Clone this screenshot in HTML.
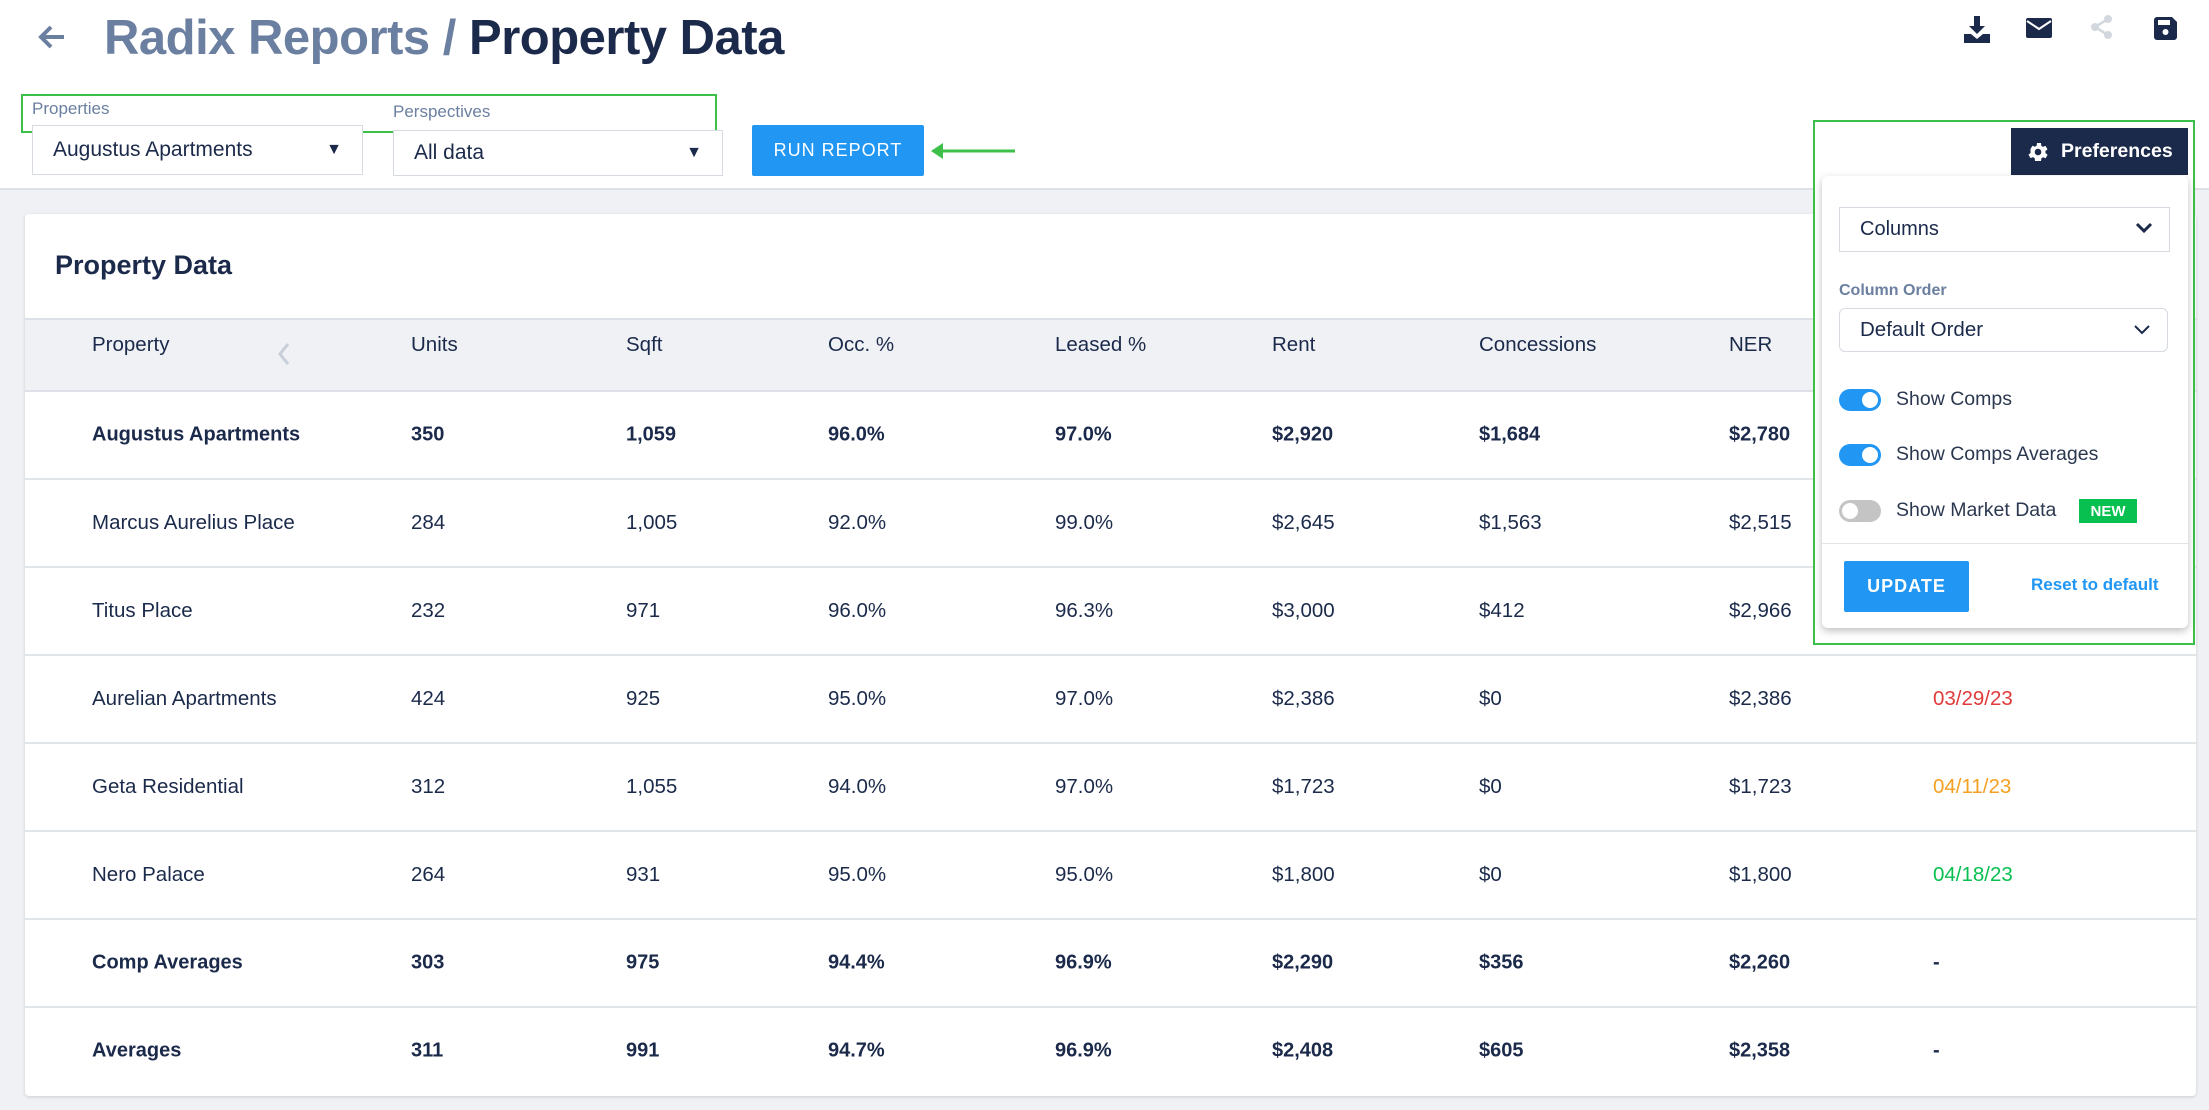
<!DOCTYPE html>
<html><head><meta charset="utf-8"><style>
*{box-sizing:border-box;margin:0;padding:0}
body{width:2209px;height:1110px;overflow:hidden;background:#eff1f5;font-family:"Liberation Sans",Arial,sans-serif;color:#1b2a4a;position:relative}
.a{position:absolute;white-space:nowrap}
.hdr{position:absolute;left:0;top:0;width:2209px;height:190px;background:#fff;border-bottom:2px solid #dde1e7}
.card{position:absolute;left:25px;top:214px;width:2171px;height:882px;background:#fff;box-shadow:0 1px 3px rgba(0,0,0,.15);border-radius:4px}
.th{position:absolute;left:25px;top:318px;width:2171px;height:74px;background:#eff1f5;border-top:2px solid #dde1e7;border-bottom:2px solid #dde1e7}
.line{position:absolute;left:25px;width:2171px;height:2px;background:#e1e5ea}
.c{position:absolute;font-size:20.5px;transform:translateY(-50%);color:#1b2a4a}
.b{font-weight:bold;font-size:20px}
.sel{position:absolute;border:1px solid #d6dbe2;background:#fff;font-size:21px;padding-left:20px;display:flex;align-items:center}
.tog{position:absolute;width:42px;height:22px;border-radius:11px;background:#2196f3}
.tog::after{content:"";position:absolute;right:3px;top:3px;width:16px;height:16px;border-radius:50%;background:#fff}
.tog.off{background:#c4c4c4}
.tog.off::after{left:3px;right:auto}
</style></head><body>
<div class="hdr"></div>
<svg class="a" style="left:36px;top:22px" width="32" height="30" viewBox="0 0 32 30"><path d="M28 15H6M15 5L5 15l10 10" stroke="#6b7fa0" stroke-width="4" fill="none"/></svg>
<div class="a" style="left:104px;top:8px;font-size:49px;line-height:60px;color:#6b7fa0;font-weight:bold;letter-spacing:-0.5px">Radix Reports / <span style="color:#1b2a4a">Property Data</span></div>
<!-- top icons -->
<svg class="a" style="left:1964px;top:16px" width="26" height="28" viewBox="0 0 26 28"><path d="M10 0h6v10h5l-8 8-8-8h5z M0 18h7l6 5 6-5h7v9H0z" fill="#1b2a4a"/></svg>
<svg class="a" style="left:2026px;top:18px" width="26" height="20" viewBox="0 0 26 20"><rect width="26" height="20" rx="2" fill="#1b2a4a"/><path d="M1 3l12 8 12-8" stroke="#fff" stroke-width="2" fill="none"/></svg>
<svg class="a" style="left:2091px;top:15px" width="22" height="24" viewBox="0 0 22 24"><circle cx="17" cy="4" r="4" fill="#d3d8df"/><circle cx="4" cy="12" r="4" fill="#d3d8df"/><circle cx="17" cy="20" r="4" fill="#d3d8df"/><path d="M17 4L4 12l13 8" stroke="#d3d8df" stroke-width="2.5" fill="none"/></svg>
<svg class="a" style="left:2154px;top:17px" width="23" height="23" viewBox="0 0 23 23"><path d="M0 3a3 3 0 013-3h15l5 5v15a3 3 0 01-3 3H3a3 3 0 01-3-3z" fill="#1b2a4a"/><rect x="4" y="3" width="12" height="5" fill="#fff"/><circle cx="11.5" cy="15" r="3" fill="#fff"/></svg>
<!-- filters -->
<div class="a" style="left:21px;top:94px;width:696px;height:39px;border:2px solid #3cc04a"></div>
<div class="a" style="left:32px;top:99px;font-size:17px;color:#6b7fa0">Properties</div>
<div class="a" style="left:393px;top:102px;font-size:17px;color:#6b7fa0">Perspectives</div>
<div class="sel" style="left:32px;top:125px;width:331px;height:50px;font-size:21px">Augustus Apartments<span class="a" style="right:20px;font-size:16px">▼</span></div>
<div class="sel" style="left:393px;top:130px;width:330px;height:46px;font-size:21px">All data<span class="a" style="right:20px;font-size:16px">▼</span></div>
<div class="a" style="left:752px;top:125px;width:172px;height:51px;background:#2196f3;border-radius:2px;color:#fff;font-size:18px;letter-spacing:1px;display:flex;align-items:center;justify-content:center">RUN REPORT</div>
<svg class="a" style="left:931px;top:142px" width="86" height="18" viewBox="0 0 86 18"><path d="M84 9H8" stroke="#3cc04a" stroke-width="3"/><path d="M0 9l12-8v16z" fill="#3cc04a"/></svg>
<!-- card -->
<div class="card"></div>
<div class="a" style="left:55px;top:250px;font-size:27px;font-weight:bold">Property Data</div>
<div class="th"></div>
<svg class="a" style="left:277px;top:342px" width="14" height="24" viewBox="0 0 14 24"><path d="M11 2L3 12l8 10" stroke="#c8cfd8" stroke-width="3" fill="none"/></svg>
<div class="line" style="top:478px"></div><div class="line" style="top:566px"></div><div class="line" style="top:654px"></div><div class="line" style="top:742px"></div><div class="line" style="top:830px"></div><div class="line" style="top:918px"></div><div class="line" style="top:1006px"></div>

<div class="c" style="left:92px;top:345px">Property</div>
<div class="c" style="left:411px;top:345px">Units</div>
<div class="c" style="left:626px;top:345px">Sqft</div>
<div class="c" style="left:828px;top:345px">Occ. %</div>
<div class="c" style="left:1055px;top:345px">Leased %</div>
<div class="c" style="left:1272px;top:345px">Rent</div>
<div class="c" style="left:1479px;top:345px">Concessions</div>
<div class="c" style="left:1729px;top:345px">NER</div>

<div class="c b" style="left:92px;top:435px">Augustus Apartments</div><div class="c b" style="left:411px;top:435px">350</div><div class="c b" style="left:626px;top:435px">1,059</div><div class="c b" style="left:828px;top:435px">96.0%</div><div class="c b" style="left:1055px;top:435px">97.0%</div><div class="c b" style="left:1272px;top:435px">$2,920</div><div class="c b" style="left:1479px;top:435px">$1,684</div><div class="c b" style="left:1729px;top:435px">$2,780</div>

<div class="c" style="left:92px;top:523px">Marcus Aurelius Place</div><div class="c" style="left:411px;top:523px">284</div><div class="c" style="left:626px;top:523px">1,005</div><div class="c" style="left:828px;top:523px">92.0%</div><div class="c" style="left:1055px;top:523px">99.0%</div><div class="c" style="left:1272px;top:523px">$2,645</div><div class="c" style="left:1479px;top:523px">$1,563</div><div class="c" style="left:1729px;top:523px">$2,515</div>

<div class="c" style="left:92px;top:611px">Titus Place</div><div class="c" style="left:411px;top:611px">232</div><div class="c" style="left:626px;top:611px">971</div><div class="c" style="left:828px;top:611px">96.0%</div><div class="c" style="left:1055px;top:611px">96.3%</div><div class="c" style="left:1272px;top:611px">$3,000</div><div class="c" style="left:1479px;top:611px">$412</div><div class="c" style="left:1729px;top:611px">$2,966</div>

<div class="c" style="left:92px;top:699px">Aurelian Apartments</div><div class="c" style="left:411px;top:699px">424</div><div class="c" style="left:626px;top:699px">925</div><div class="c" style="left:828px;top:699px">95.0%</div><div class="c" style="left:1055px;top:699px">97.0%</div><div class="c" style="left:1272px;top:699px">$2,386</div><div class="c" style="left:1479px;top:699px">$0</div><div class="c" style="left:1729px;top:699px">$2,386</div><div class="c" style="left:1933px;top:699px;color:#e03a3a">03/29/23</div>

<div class="c" style="left:92px;top:787px">Geta Residential</div><div class="c" style="left:411px;top:787px">312</div><div class="c" style="left:626px;top:787px">1,055</div><div class="c" style="left:828px;top:787px">94.0%</div><div class="c" style="left:1055px;top:787px">97.0%</div><div class="c" style="left:1272px;top:787px">$1,723</div><div class="c" style="left:1479px;top:787px">$0</div><div class="c" style="left:1729px;top:787px">$1,723</div><div class="c" style="left:1933px;top:787px;color:#f5a020">04/11/23</div>

<div class="c" style="left:92px;top:875px">Nero Palace</div><div class="c" style="left:411px;top:875px">264</div><div class="c" style="left:626px;top:875px">931</div><div class="c" style="left:828px;top:875px">95.0%</div><div class="c" style="left:1055px;top:875px">95.0%</div><div class="c" style="left:1272px;top:875px">$1,800</div><div class="c" style="left:1479px;top:875px">$0</div><div class="c" style="left:1729px;top:875px">$1,800</div><div class="c" style="left:1933px;top:875px;color:#08c050">04/18/23</div>

<div class="c b" style="left:92px;top:963px">Comp Averages</div><div class="c b" style="left:411px;top:963px">303</div><div class="c b" style="left:626px;top:963px">975</div><div class="c b" style="left:828px;top:963px">94.4%</div><div class="c b" style="left:1055px;top:963px">96.9%</div><div class="c b" style="left:1272px;top:963px">$2,290</div><div class="c b" style="left:1479px;top:963px">$356</div><div class="c b" style="left:1729px;top:963px">$2,260</div><div class="c b" style="left:1933px;top:963px">-</div>

<div class="c b" style="left:92px;top:1051px">Averages</div><div class="c b" style="left:411px;top:1051px">311</div><div class="c b" style="left:626px;top:1051px">991</div><div class="c b" style="left:828px;top:1051px">94.7%</div><div class="c b" style="left:1055px;top:1051px">96.9%</div><div class="c b" style="left:1272px;top:1051px">$2,408</div><div class="c b" style="left:1479px;top:1051px">$605</div><div class="c b" style="left:1729px;top:1051px">$2,358</div><div class="c b" style="left:1933px;top:1051px">-</div>

<!-- preferences -->
<div class="a" style="left:1813px;top:120px;width:382px;height:525px;border:2px solid #3cc04a;background:#fff"></div>
<div class="a" style="left:1815px;top:192px;width:378px;height:451px;background:#fff"></div>
<div class="a" style="left:2011px;top:128px;width:177px;height:47px;background:#1b2a4a;color:#fff;font-size:19.5px;font-weight:bold;display:flex;align-items:center;padding-left:15px">
<svg width="24" height="24" viewBox="0 0 24 24" style="margin-right:11px"><path fill="#fff" d="M19.4 13a7.6 7.6 0 000-2l2.1-1.6-2-3.5-2.5 1a7 7 0 00-1.7-1L15 3h-4l-.4 2.7a7 7 0 00-1.7 1l-2.5-1-2 3.5L4.6 11a7.6 7.6 0 000 2l-2.1 1.6 2 3.5 2.5-1a7 7 0 001.7 1L9 21h6l.4-2.7a7 7 0 001.7-1l2.5 1 2-3.5zM12 15.3a3.3 3.3 0 110-6.6 3.3 3.3 0 010 6.6z"/></svg>Preferences</div>
<div class="a" style="left:1822px;top:176px;width:366px;height:452px;background:#fff;border-radius:6px;box-shadow:0 3px 8px rgba(0,0,0,.25)"></div>
<div class="sel" style="left:1839px;top:207px;width:331px;height:45px;font-size:20px;border-color:#d6dbe2">Columns<svg class="a" style="right:16px;top:14px" width="18" height="12" viewBox="0 0 18 12"><path d="M2 2l7 7 7-7" stroke="#1b2a4a" stroke-width="3" fill="none"/></svg></div>
<div class="a" style="left:1839px;top:282px;font-size:16px;color:#6b7fa0;font-weight:bold">Column Order</div>
<div class="sel" style="left:1839px;top:308px;width:329px;height:44px;border-radius:6px;font-size:20.5px">Default Order<svg class="a" style="right:16px;top:15px" width="18" height="12" viewBox="0 0 18 12"><path d="M2 2l7 7 7-7" stroke="#1b2a4a" stroke-width="2" fill="none"/></svg></div>
<div class="tog" style="left:1839px;top:389px"></div><div class="a" style="left:1896px;top:388px;font-size:19.5px;color:#2b3850">Show Comps</div>
<div class="tog" style="left:1839px;top:444px"></div><div class="a" style="left:1896px;top:443px;font-size:19.5px;color:#2b3850">Show Comps Averages</div>
<div class="tog off" style="left:1839px;top:500px"></div><div class="a" style="left:1896px;top:499px;font-size:19.5px;color:#2b3850">Show Market Data</div>
<div class="a" style="left:2079px;top:499px;width:58px;height:24px;background:#08c050;color:#fff;font-size:15px;font-weight:bold;display:flex;align-items:center;justify-content:center">NEW</div>
<div class="a" style="left:1822px;top:543px;width:366px;height:1px;background:#e1e5ea"></div>
<div class="a" style="left:1844px;top:561px;width:125px;height:51px;background:#2196f3;border-radius:2px;color:#fff;font-size:18px;font-weight:bold;letter-spacing:1px;display:flex;align-items:center;justify-content:center">UPDATE</div>
<div class="a" style="left:2031px;top:575px;font-size:17px;font-weight:bold;color:#2196f3">Reset to default</div>
</body></html>
